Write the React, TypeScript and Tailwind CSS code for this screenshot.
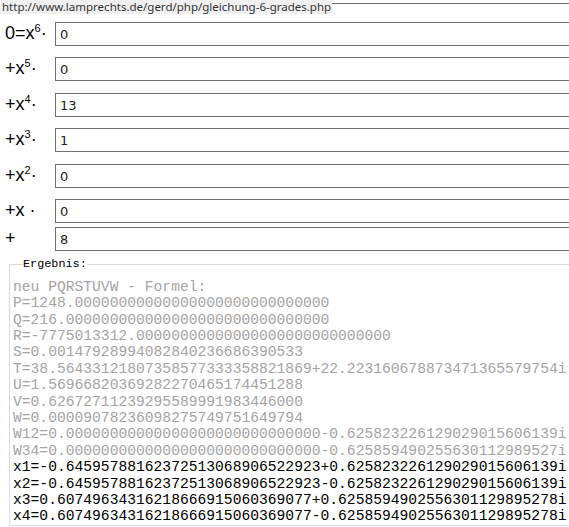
import React from 'react';

// coefficient rows: label before the superscript, the exponent, the value
const coefficients = [
	{ label: '0=x', exp: '6', value: '0', space: 'mt-[18px]' },
	{ label: '+x', exp: '5', value: '0', space: 'mt-[11px]' },
	{ label: '+x', exp: '4', value: '13', space: 'mt-[12px]' },
	{ label: '+x', exp: '3', value: '1', space: 'mt-[11px]' },
	{ label: '+x', exp: '2', value: '0', space: 'mt-[12px]' },
	{ label: '+x ', exp: '', value: '0', space: 'mt-[11px]' },
	{ label: '+', exp: '', value: '8', space: 'mt-[4px]', last: true },
];

const resultLines = [
	{ text: 'neu PQRSTUVW - Formel:', dim: true },
	{ text: 'P=1248.00000000000000000000000000000', dim: true },
	{ text: 'Q=216.000000000000000000000000000000', dim: true },
	{ text: 'R=-7775013312.00000000000000000000000000000', dim: true },
	{ text: 'S=0.00147928994082840236686390533', dim: true },
	{ text: 'T=38.56433121807358577333358821869+22.223160678873471365579754i', dim: true },
	{ text: 'U=1.56966820369282270465174451288', dim: true },
	{ text: 'V=0.62672711239295589991983446000', dim: true },
	{ text: 'W=0.00009078236098275749751649794', dim: true },
	{ text: 'W12=0.00000000000000000000000000000-0.625823226129029015606139i', dim: true },
	{ text: 'W34=0.00000000000000000000000000000-0.625859490255630112989527i', dim: true },
	{ text: 'x1=-0.64595788162372513068906522923+0.625823226129029015606139i', dim: false },
	{ text: 'x2=-0.64595788162372513068906522923-0.625823226129029015606139i', dim: false },
	{ text: 'x3=0.60749634316218666915060369077+0.6258594902556301129895278i', dim: false },
	{ text: 'x4=0.60749634316218666915060369077-0.6258594902556301129895278i', dim: false },
];

const App = () => {
	return (
		<div className="relative w-[569px] h-[527px] overflow-hidden bg-white">
			{/* hover url shown by the browser */}
			<div className="absolute left-0 top-0 z-10 h-[14px] w-[332px] bg-[#f0f0f0] pl-[2px] font-['Noto_Sans',sans-serif] text-[11.5px] leading-[13px] text-[#333]">
				http://www.lamprechts.de/gerd/php/gleichung-6-grades.php
			</div>

			{/* bottom edge of the field above */}
			<div className="ml-[55px] h-[4px] w-[600px] border-b border-[#707070]" />

			{coefficients.map((row, i) => (
				<div key={i} className={`flex h-[24px] ${row.space}`}>
					<div className="w-[55px] shrink-0 whitespace-pre pl-[5px] font-['Liberation_Sans',Arial,sans-serif] text-[18px] leading-[23px] text-black">
						{row.label}
						{row.exp && <sup className="top-[-7px] text-[11px]">{row.exp}</sup>}
						{!row.last && '·'}
					</div>
					<input
						type="text"
						defaultValue={row.value}
						className="h-[24px] w-[560px] shrink-0 border border-[#707070] px-[4px] font-['DejaVu_Sans',Verdana,sans-serif] text-[13px] text-[#222] outline-none"
					/>
				</div>
			))}

			<fieldset className="mt-[5px] ml-[9px] w-[620px] border border-[#dadada] pl-[3px] pt-[5px] font-['Liberation_Mono','Courier_New',monospace]">
				<legend className="ml-[10px] text-[11.8px] text-black">Ergebnis:</legend>
				{resultLines.map((line, i) => (
					<div
						key={i}
						className={`whitespace-pre text-[14.65px] leading-[16.4px] ${line.dim ? 'text-[#a4a4a4]' : 'text-black'}`}
					>
						{line.text}
					</div>
				))}
			</fieldset>
		</div>
	);
};

export default App;
